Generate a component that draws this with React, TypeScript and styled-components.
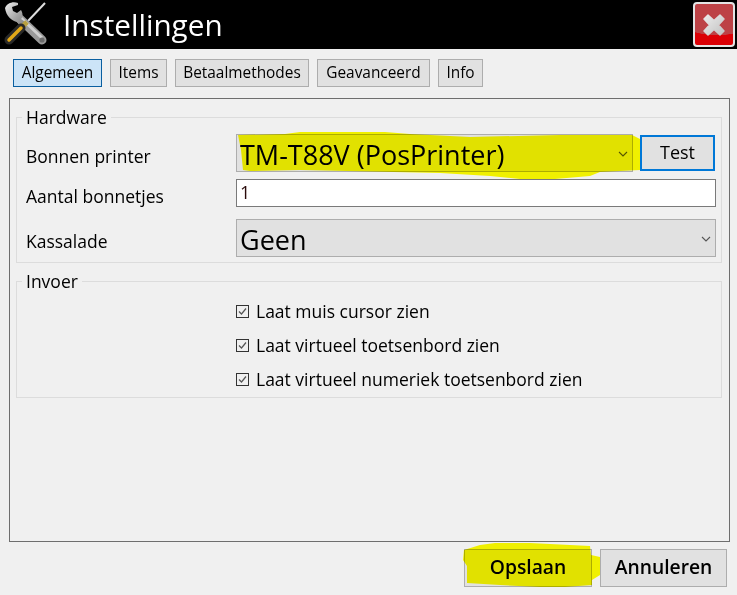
import * as React from 'react'
import styled, { createGlobalStyle } from 'styled-components'

const GlobalStyle = createGlobalStyle`
    html, body {
        margin: 0;
        padding: 0;
        background: #f0f0f0;
    }
    * {
        box-sizing: border-box;
    }
`

const Page = styled.div`
    position: relative;
    width: 737px;
    height: 595px;
    display: flex;
    flex-direction: column;
    overflow: hidden;
    background: #f0f0f0;
    color: #000;
    font-family: 'Open Sans', 'Noto Sans', sans-serif;
`

const TitleBar = styled.div`
    height: 49px;
    background: #000;
    display: flex;
    align-items: center;
    padding: 0 2px 0 0;
    flex-shrink: 0;
`

const Title = styled.div`
    flex: 1;
    margin-left: 11px;
    font-size: 29.7px;
    color: #fff;
    line-height: 49px;
`

const CloseButton = styled.div`
    width: 42px;
    height: 45px;
    border: 2px solid #e4e4e4;
    border-radius: 4px;
    background:
        radial-gradient(ellipse 46px 24px at 58% 18%, #bd4246 0%, #bd4246 98%, transparent 100%),
        #dc0006;
    display: flex;
    align-items: center;
    justify-content: center;
`

const TabRow = styled.div`
    display: flex;
    gap: 8px;
    padding: 10px 0 0 13px;
`

const Tab = styled.div<{ $active?: boolean; $width: number }>`
    width: ${(p) => p.$width}px;
    height: 28px;
    border: 1px solid ${(p) => (p.$active ? '#0a5fa0' : '#adadad')};
    background: ${(p) => (p.$active ? '#cce4f7' : '#e1e1e1')};
    font-size: 15.4px;
    line-height: 26px;
    text-align: center;
    white-space: nowrap;
`

const Panel = styled.div`
    flex: 1;
    margin: 11px 7px 0 9px;
    border: 1px solid #6e6e6e;
    padding: 7px 7px 0 6px;
    display: flex;
    flex-direction: column;
    gap: 7px;
`

const Group = styled.fieldset<{ $height: number }>`
    margin: 0;
    height: ${(p) => p.$height}px;
    padding: 0;
    border: 1px solid #dcdcdc;
`

const GroupLegend = styled.legend`
    margin-left: 5px;
    padding: 0 4px;
    font-size: 17.5px;
    line-height: 22px;
    height: 22px;
`

const HardwareGrid = styled.div`
    display: grid;
    grid-template-columns: 210px 397px 1fr;
    grid-template-rows: 38px 33px 38px;
    row-gap: 7px;
    padding: 6px 0 0 9px;
    align-items: start;
`

const RowLabel = styled.div<{ $offset: number }>`
    margin-top: ${(p) => p.$offset}px;
    font-size: 17.5px;
    line-height: 24px;
    white-space: nowrap;
`

const SelectBox = styled.div<{ $wide?: boolean }>`
    height: 38px;
    ${(p) => (p.$wide ? 'grid-column: 2 / 4; margin-right: 5px;' : '')}
    border: 1px solid #adadad;
    background: #e1e1e1;
    display: flex;
    align-items: center;
    justify-content: space-between;
    padding: 2px 4px 0 3px;
    font-size: 27px;
    white-space: nowrap;
`

const TestButton = styled.div`
    width: 75px;
    height: 36px;
    margin: 1px 0 0 7px;
    border: 2px solid #0078d7;
    background: #e1e1e1;
    font-size: 18px;
    line-height: 31px;
    text-align: center;
`

const NumberInput = styled.div`
    grid-column: 2 / 4;
    margin-right: 5px;
    height: 28px;
    border: 1px solid #7a7a7a;
    background: #fff;
    color: #2a0a0a;
    font-size: 18px;
    line-height: 24px;
    padding-left: 3px;
`

const CheckList = styled.div`
    display: flex;
    flex-direction: column;
    gap: 12px;
    padding: 8px 0 0 219px;
`

const CheckRow = styled.div`
    display: flex;
    align-items: center;
    gap: 7px;
    height: 22px;
    font-size: 17.5px;
    white-space: nowrap;
`

const CheckMark = styled.div`
    width: 13px;
    height: 13px;
    border: 1px solid #333;
    display: flex;
    flex-shrink: 0;
`

const Footer = styled.div`
    height: 53px;
    display: flex;
    justify-content: flex-end;
    gap: 8px;
    padding: 7px 10px 0 0;
    flex-shrink: 0;
`

const FooterButton = styled.div<{ $width: number }>`
    width: ${(p) => p.$width}px;
    height: 38px;
    border: 1px solid #adadad;
    background: #e1e1e1;
    font-size: 19.3px;
    font-weight: 600;
    line-height: 33px;
    text-align: center;
`

const MarkerLayer = styled.svg`
    position: absolute;
    inset: 0;
    mix-blend-mode: multiply;
    pointer-events: none;
`

const ToolsIcon = () => (
    <svg width="52" height="49" viewBox="0 0 52 49">
        <defs>
            <linearGradient id="steel" x1="0" y1="0" x2="1" y2="1">
                <stop offset="0" stopColor="#f0f0f0" />
                <stop offset="0.6" stopColor="#a4a4a4" />
                <stop offset="1" stopColor="#808080" />
            </linearGradient>
        </defs>
        {/* screwdriver shaft */}
        <path d="M45 3 L28 21" stroke="#dedede" strokeWidth="2" fill="none" />
        {/* wrench handle */}
        <path d="M20 19 L42 40" stroke="#9a9a9a" strokeWidth="9" strokeLinecap="round" fill="none" />
        <path d="M20 17 L42 38" stroke="#d0d0d0" strokeWidth="3" fill="none" />
        <circle cx="42" cy="40" r="2.6" fill="#6c6c6c" />
        {/* wrench head */}
        <path
            d="M5 8 C7 3 13 1 18 3 L18 5 L12 7 L13 11 L17 13 L21 10 C23 13 23 17 21 19 L25 22 L21 26 L17 22 C12 21 6 16 5 8 Z"
            fill="url(#steel)"
        />
        {/* screwdriver handle */}
        <path d="M27 22 L23 26" stroke="#b8a040" strokeWidth="5" fill="none" />
        <path d="M21 28 L9 40" stroke="#2a2a2a" strokeWidth="9" strokeLinecap="round" fill="none" />
        <path d="M21 28 L9 40" stroke="#e2a818" strokeWidth="3.5" strokeLinecap="round" fill="none" />
    </svg>
)

const CloseCross = () => (
    <svg width="24" height="24" viewBox="0 0 24 24">
        <defs>
            <linearGradient id="cross" x1="0" y1="0" x2="1" y2="1">
                <stop offset="0" stopColor="#ececec" />
                <stop offset="1" stopColor="#c2c2c2" />
            </linearGradient>
        </defs>
        <path
            d="M6 2 L12 7.5 L18 2 L22 6 L16.5 12 L22 18 L18 22 L12 16.5 L6 22 L2 18 L7.5 12 L2 6 Z"
            fill="url(#cross)"
            stroke="url(#cross)"
            strokeWidth="1.5"
            strokeLinejoin="round"
        />
    </svg>
)

const Chevron = () => (
    <svg width="10" height="6" viewBox="0 0 10 6">
        <path d="M1 1 L5 5 L9 1" fill="none" stroke="#555" strokeWidth="1.1" />
    </svg>
)

const Tick = () => (
    <svg width="11" height="11" viewBox="0 0 11 11">
        <path d="M2 5.5 L4.5 8 L9 2.5" fill="none" stroke="#555" strokeWidth="1.2" />
    </svg>
)

const tabs = [
    { label: 'Algemeen', width: 89, active: true },
    { label: 'Items', width: 57 },
    { label: 'Betaalmethodes', width: 134 },
    { label: 'Geavanceerd', width: 113 },
    { label: 'Info', width: 45 },
]

const checks = [
    'Laat muis cursor zien',
    'Laat virtueel toetsenbord zien',
    'Laat virtueel numeriek toetsenbord zien',
]

export default function App() {
    return (
        <Page>
            <GlobalStyle />
            <TitleBar>
                <ToolsIcon />
                <Title>Instellingen</Title>
                <CloseButton>
                    <CloseCross />
                </CloseButton>
            </TitleBar>
            <TabRow>
                {tabs.map((t) => (
                    <Tab key={t.label} $active={t.active} $width={t.width}>
                        {t.label}
                    </Tab>
                ))}
            </TabRow>
            <Panel>
                <Group $height={157}>
                    <GroupLegend>Hardware</GroupLegend>
                    <HardwareGrid>
                        <RowLabel $offset={10}>Bonnen printer</RowLabel>
                        <SelectBox>
                            TM-T88V (PosPrinter)
                            <Chevron />
                        </SelectBox>
                        <TestButton>Test</TestButton>
                        <RowLabel $offset={5}>Aantal bonnetjes</RowLabel>
                        <NumberInput>1</NumberInput>
                        <RowLabel $offset={10}>Kassalade</RowLabel>
                        <SelectBox $wide>
                            Geen
                            <Chevron />
                        </SelectBox>
                    </HardwareGrid>
                </Group>
                <Group $height={128}>
                    <GroupLegend>Invoer</GroupLegend>
                    <CheckList>
                        {checks.map((c) => (
                            <CheckRow key={c}>
                                <CheckMark>
                                    <Tick />
                                </CheckMark>
                                {c}
                            </CheckRow>
                        ))}
                    </CheckList>
                </Group>
            </Panel>
            <Footer>
                <FooterButton $width={128}>Opslaan</FooterButton>
                <FooterButton $width={127}>Annuleren</FooterButton>
            </Footer>
            <MarkerLayer width="737" height="595" viewBox="0 0 737 595">
                <path
                    d="M238 135 L285 134 L300 132 L385 132 L410 134 L470 137 L560 135 L632 135 L640 139 L640 170 L600 172 L590 176 L555 179 L520 179 L490 176 L440 173 L300 170 L250 171 L243 170 L241 150 Z"
                    fill="#ffff00"
                />
                <path
                    d="M464 550 L480 545 L495 543 L530 543 L590 546 L591 555 L600 557 L600 575 L592 580 L592 585 L565 587 L540 587 L500 585 L467 583 L467 566 L463 560 Z"
                    fill="#ffff00"
                />
            </MarkerLayer>
        </Page>
    )
}
